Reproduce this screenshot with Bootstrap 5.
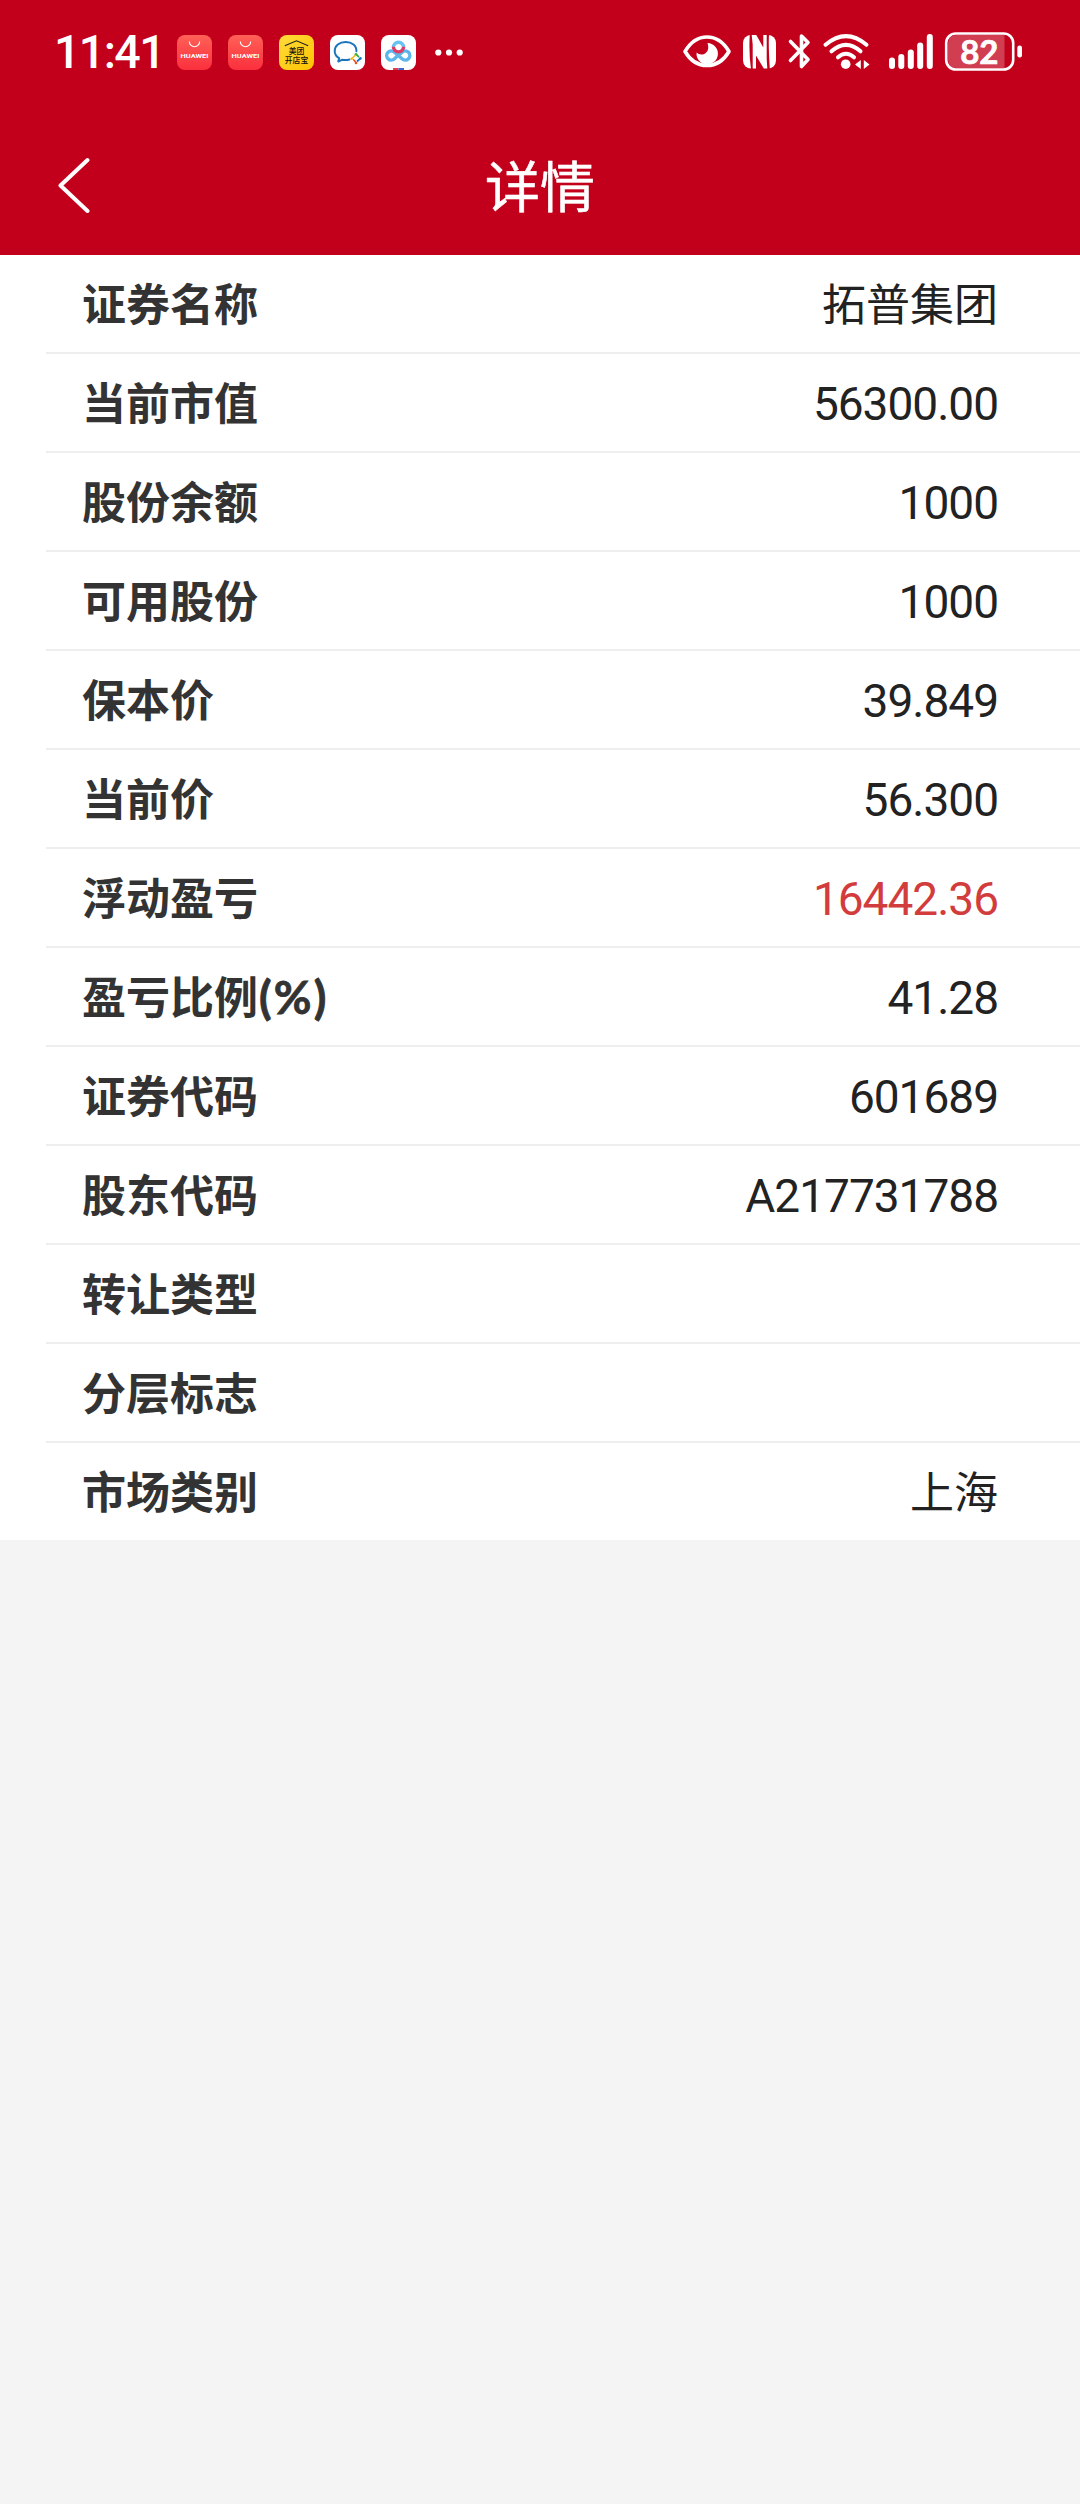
<!DOCTYPE html>
<html lang="zh-CN">
<head>
<meta charset="utf-8">
<meta name="viewport" content="width=device-width, initial-scale=1">
<title>详情</title>
<link href="https://cdn.jsdelivr.net/npm/bootstrap@5.3.0/dist/css/bootstrap.min.css" rel="stylesheet">
<style>
body{background:#f4f4f4;font-family:Roboto,"Noto Sans CJK SC",sans-serif;color:#222}
.top-area{background:#c3001b;color:#fff;height:255px}
.status-bar{height:104px;padding:0 57px 0 54px}
.status-bar svg{display:block;flex:none;overflow:visible}
.clock{font-size:46.5px;font-weight:500;line-height:1;letter-spacing:-1.6px;width:123px;white-space:nowrap}
.app-icons{gap:16px}
.title-bar{height:151px;padding-top:16px}
.title-bar h1{font-size:55px;line-height:80px;font-weight:400;-webkit-text-stroke:.6px #fff}
.back-btn{left:55px;top:53px;line-height:0}
.detail-list{background:#fff;padding-left:46px}
.detail-item{height:99px;border-bottom:2px solid #eee;padding:3px 82px 0 36px;line-height:97px}
.detail-item:last-child{height:97px;border-bottom:0}
.item-label{font-size:44px;font-weight:700;color:#333;height:94px}
.latin-part{font-family:Lato,sans-serif;font-size:46px;line-height:1;letter-spacing:2.2px;margin-left:1px;-webkit-text-stroke:.8px #333}
.item-value{font-size:44px;font-weight:400;height:94px}
.item-num{font-size:46px;letter-spacing:-1px;margin-top:-1px}
.profit{color:#d23c3c}
</style>
</head>
<body>
<header class="top-area">
  <div class="status-bar d-flex align-items-center justify-content-between">
    <div class="d-flex align-items-center">
      <span class="clock">11:41</span>
      <div class="app-icons d-flex">
        <svg width="35" height="35" viewBox="0 0 350 350"><defs><linearGradient id="hw" x2="0" y2="1"><stop stop-color="#ff6157"/><stop offset="1" stop-color="#fb2f3d"/></linearGradient></defs><rect width="350" height="350" rx="80" fill="url(#hw)"/><path d="M123 65a52 52 0 0 0 104 0" fill="none" stroke="#fff" stroke-width="11"/><text x="36" y="225" font-size="62" font-weight="700" fill="#fff" textLength="278" lengthAdjust="spacingAndGlyphs">HUAWEI</text></svg>
        <svg width="35" height="35" viewBox="0 0 350 350"><rect width="350" height="350" rx="80" fill="url(#hw)"/><path d="M123 65a52 52 0 0 0 104 0" fill="none" stroke="#fff" stroke-width="11"/><text x="36" y="225" font-size="62" font-weight="700" fill="#fff" textLength="278" lengthAdjust="spacingAndGlyphs">HUAWEI</text></svg>
        <svg width="35" height="35" viewBox="0 0 350 350"><defs><linearGradient id="mt" x2="1" y2="1"><stop stop-color="#ffdc3c"/><stop offset="1" stop-color="#ffc300"/></linearGradient></defs><rect width="350" height="350" rx="80" fill="url(#mt)"/><path d="M58 107L175 58L292 107" fill="none" stroke="#222" stroke-width="12"/><text x="175" y="187" font-size="78" font-weight="500" fill="#111" text-anchor="middle">美团</text><text x="175" y="276" font-size="78" font-weight="500" fill="#111" text-anchor="middle">开店宝</text></svg>
        <svg width="35" height="35" viewBox="0 0 35 35"><rect width="35" height="35" rx="8" fill="#fff"/><path d="M26.400 16.300C26.800 10.500 21.800 7 15.700 7 9.300 7 4.700 10.800 4.700 16c0 3.300 1.700 5.600 4.400 7.200L8.300 26.600 12.400 24.700c2.300.6 4.500.5 7-.2" fill="none" stroke="#1b75bd" stroke-width="2" stroke-linejoin="round" stroke-linecap="round"/><g stroke-width="1.700" stroke-linecap="round"><path d="M26.300 19.500L28.500 21.700" stroke="#2ca44d"/><circle cx="26" cy="19.300" r="1.500" fill="#4bb63e"/><circle cx="30.400" cy="23.400" r="1.300" fill="#1476c4"/><path d="M27.500 26L29.700 24" stroke="#1476c4"/><circle cx="26" cy="28" r="1.300" fill="#ea5224"/><path d="M23.800 25L25.600 27" stroke="#ea5224"/><circle cx="21.700" cy="23.700" r="1.300" fill="#f3b51b"/><path d="M22.400 23L24.500 21" stroke="#f3b51b"/></g></svg>
        <svg width="35" height="35" viewBox="0 0 35 35"><rect width="35" height="35" rx="8" fill="#fff"/><g fill="none" stroke-width="3.400"><path d="M17.500 19.500L13.500 23.800A4.600 4.600 0 1 1 13.500 17.200L21 23.800A4.600 4.600 0 1 0 21 17.200L17.500 20.500" stroke="#5cb6ea"/><path d="M12.400 14.300A5.100 5.100 0 1 1 22.600 14.300" transform="translate(0 -2)" stroke="#68c3f2"/><path d="M12.400 11.800A5.100 5.100 0 1 0 22.600 11.800" stroke="#df3d66"/></g><path d="M12 33h5.500v2H12z" fill="#e43c50"/><path d="M17.500 33H23v2h-5.500z" fill="#4067d1"/></svg>
        <svg width="31" height="35" viewBox="0 0 31 35" fill="#fff"><circle cx="6.300" cy="17.500" r="3.100"/><circle cx="17" cy="17.500" r="3.100"/><circle cx="27.700" cy="17.500" r="3.100"/></svg>
      </div>
    </div>
    <svg width="341" height="40" viewBox="682 32 341 40" fill="#fff">
      <path d="M685 51.500C690 43 698 37 707 37S724 43 729 51.500C724 60 716 65.500 707 65.500S690 60 685 51.500Z" fill="none" stroke="#fff" stroke-width="3.600" stroke-linejoin="round"/>
      <path d="M707.500 43A10.700 10.700 0 1 1 696.600 52.500Q698.500 54.800 702 54.600C707.500 54 709.500 48.500 707.500 43Z"/>
      <rect x="743" y="35" width="33" height="33.500" rx="8"/>
      <path d="M749.800 34.500H769Q768.300 45 769.800 69H751Q748.600 52 749.800 34.500Z" fill="#c3001b"/>
      <path d="M751.700 35H756.300L763.300 47.500V35H766.700V59L767.300 68.500H763.800L756 55.500V68.500H752.700V45Z"/>
      <path d="M790.500 41.500L808 59.500L801.500 66.500V36L808 42.500L790.500 60.500" fill="none" stroke="#fff" stroke-width="3.600" stroke-linecap="round" stroke-linejoin="round"/>
      <g fill="none" stroke="#fff" stroke-width="4" stroke-linecap="round"><path d="M825.500 44.800Q846 27.500 866.500 44.800"/><path d="M831.500 51.300Q846 38.300 860.500 51.300"/><path d="M838 57.300Q846 50.200 854 57.300"/></g>
      <circle cx="845.700" cy="64.200" r="4.800"/>
      <path d="M860.800 60V69L855 64.500Z M863.800 60V69L869.500 64.500Z"/>
      <rect x="889" y="57.500" width="6" height="11.500" rx="3"/><rect x="898.300" y="54" width="6" height="15" rx="3"/><rect x="907.800" y="49.500" width="6" height="19.500" rx="3"/><rect x="917.200" y="42.500" width="6" height="26.500" rx="3"/><rect x="926.800" y="34" width="6" height="35" rx="3"/>
      <path d="M957 35H1004.500V68H957Q948 68 948 59V44Q948 35 957 35Z" opacity=".24"/>
      <rect x="946.200" y="33.500" width="67" height="36" rx="9.500" fill="none" stroke="#fff" stroke-width="2.600"/>
      <rect x="1017.300" y="45.500" width="4.700" height="12" rx="2.300"/>
      <text x="979.300" y="63.700" font-family="Lato" font-size="33" font-weight="700" stroke="#fff" stroke-width=".7" text-anchor="middle">82</text>
    </svg>
  </div>
  <nav class="title-bar position-relative d-flex align-items-center justify-content-center">
    <a class="back-btn position-absolute" href="#" aria-label="返回"><svg width="36" height="56" viewBox="0 0 36 56"><path d="M32.500 3L5.500 28.500L32.500 54" fill="none" stroke="#fff" stroke-width="4" stroke-linecap="round" stroke-linejoin="round"/></svg></a>
    <h1 class="m-0">详情</h1>
  </nav>
</header>
<main class="detail-list">
  <div class="detail-item d-flex justify-content-between"><span class="item-label">证券名称</span><span class="item-value">拓普集团</span></div>
  <div class="detail-item d-flex justify-content-between"><span class="item-label">当前市值</span><span class="item-value item-num">56300.00</span></div>
  <div class="detail-item d-flex justify-content-between"><span class="item-label">股份余额</span><span class="item-value item-num">1000</span></div>
  <div class="detail-item d-flex justify-content-between"><span class="item-label">可用股份</span><span class="item-value item-num">1000</span></div>
  <div class="detail-item d-flex justify-content-between"><span class="item-label">保本价</span><span class="item-value item-num">39.849</span></div>
  <div class="detail-item d-flex justify-content-between"><span class="item-label">当前价</span><span class="item-value item-num">56.300</span></div>
  <div class="detail-item d-flex justify-content-between"><span class="item-label">浮动盈亏</span><span class="item-value item-num profit">16442.36</span></div>
  <div class="detail-item d-flex justify-content-between"><span class="item-label">盈亏比例<span class="latin-part">(%)</span></span><span class="item-value item-num">41.28</span></div>
  <div class="detail-item d-flex justify-content-between"><span class="item-label">证券代码</span><span class="item-value item-num">601689</span></div>
  <div class="detail-item d-flex justify-content-between"><span class="item-label">股东代码</span><span class="item-value item-num">A217731788</span></div>
  <div class="detail-item d-flex justify-content-between"><span class="item-label">转让类型</span><span class="item-value"></span></div>
  <div class="detail-item d-flex justify-content-between"><span class="item-label">分层标志</span><span class="item-value"></span></div>
  <div class="detail-item d-flex justify-content-between"><span class="item-label">市场类别</span><span class="item-value">上海</span></div>
</main>
<script src="https://cdn.jsdelivr.net/npm/bootstrap@5.3.0/dist/js/bootstrap.bundle.min.js"></script>
</body>
</html>
